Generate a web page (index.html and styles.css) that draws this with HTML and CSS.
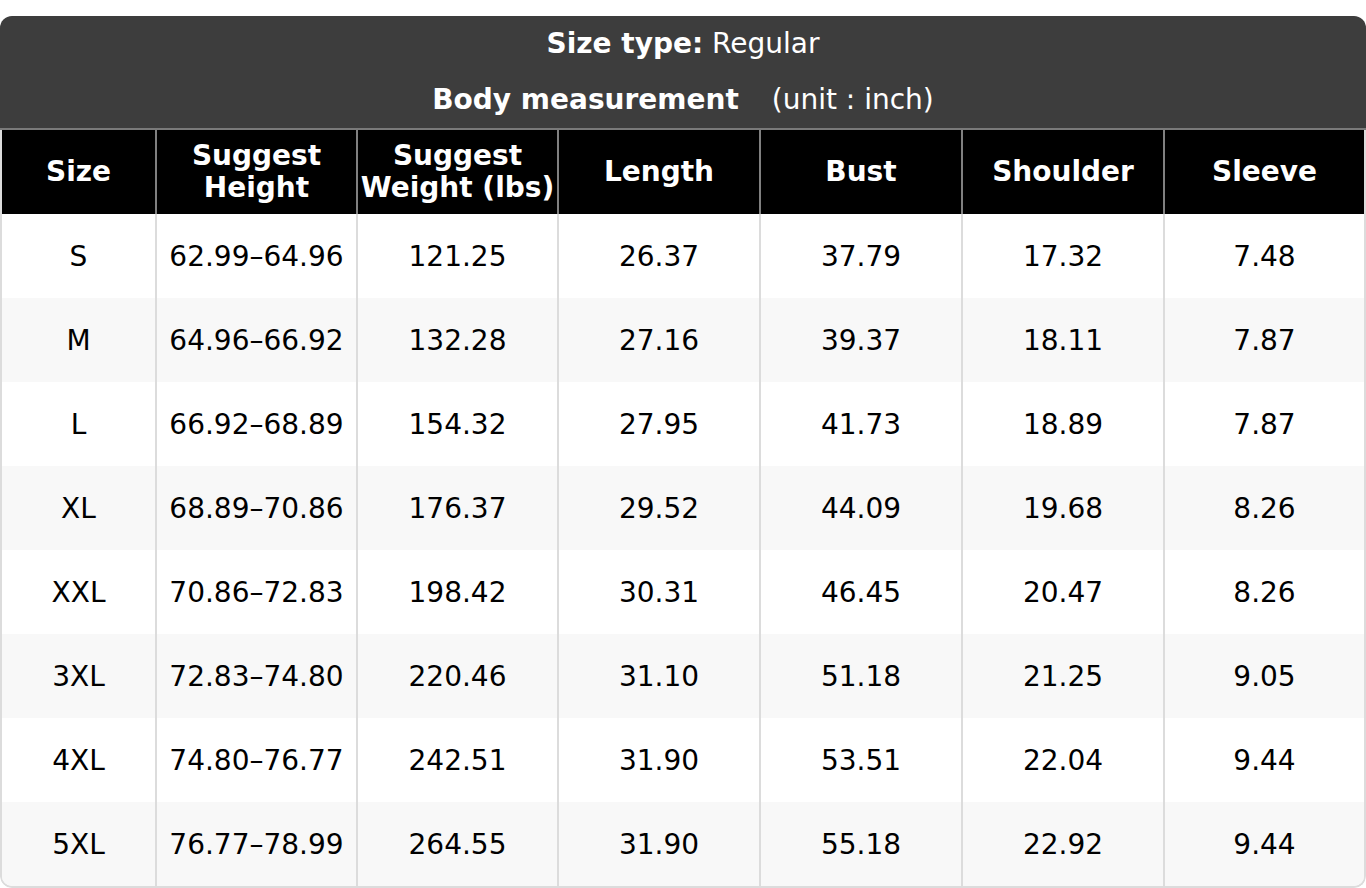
FILE: index.html
```html
<!DOCTYPE html>
<html>
<head>
<meta charset="utf-8">
<link rel="stylesheet" href="styles.css">
</head>
<body>
<div class="chart">
  <div class="title">
    <div class="line"><b>Size type:</b> Regular</div>
    <div class="line"><b>Body measurement</b><span class="unit">(unit : inch)</span></div>
  </div>
  <div class="wrap">
    <table>
      <colgroup><col class="c1"><col class="c2"><col class="c2"><col class="c3"><col class="c3"><col class="c3"><col></colgroup>
      <thead>
        <tr><th>Size</th><th>Suggest<br>Height</th><th>Suggest<br>Weight (lbs)</th><th>Length</th><th>Bust</th><th>Shoulder</th><th>Sleeve</th></tr>
      </thead>
      <tbody>
        <tr><td>S</td><td>62.99–64.96</td><td>121.25</td><td>26.37</td><td>37.79</td><td>17.32</td><td>7.48</td></tr>
        <tr><td>M</td><td>64.96–66.92</td><td>132.28</td><td>27.16</td><td>39.37</td><td>18.11</td><td>7.87</td></tr>
        <tr><td>L</td><td>66.92–68.89</td><td>154.32</td><td>27.95</td><td>41.73</td><td>18.89</td><td>7.87</td></tr>
        <tr><td>XL</td><td>68.89–70.86</td><td>176.37</td><td>29.52</td><td>44.09</td><td>19.68</td><td>8.26</td></tr>
        <tr><td>XXL</td><td>70.86–72.83</td><td>198.42</td><td>30.31</td><td>46.45</td><td>20.47</td><td>8.26</td></tr>
        <tr><td>3XL</td><td>72.83–74.80</td><td>220.46</td><td>31.10</td><td>51.18</td><td>21.25</td><td>9.05</td></tr>
        <tr><td>4XL</td><td>74.80–76.77</td><td>242.51</td><td>31.90</td><td>53.51</td><td>22.04</td><td>9.44</td></tr>
        <tr><td>5XL</td><td>76.77–78.99</td><td>264.55</td><td>31.90</td><td>55.18</td><td>22.92</td><td>9.44</td></tr>
      </tbody>
    </table>
  </div>
</div>
</body>
</html>
```
FILE: styles.css
```css
html, body {
  margin: 0;
  padding: 0;
  background: #ffffff;
}
body {
  padding-top: 16px;
  font-family: "DejaVu Sans", sans-serif;
}
.chart {
  width: 1366px;
  border-radius: 12px;
  overflow: hidden;
}
.title {
  background: #3d3d3d;
  color: #ffffff;
  text-align: center;
  font-size: 28px;
  border-bottom: 2px solid #7a7a7a;
}
.title .line {
  height: 56px;
  line-height: 56px;
}
.title b {
  font-weight: bold;
}
.unit {
  margin-left: 33px;
}
.wrap {
  border: 2px solid #dcdcdc;
  border-top: 0;
  border-radius: 0 0 12px 12px;
  overflow: hidden;
}
table {
  width: 1362px;
  border-collapse: separate;
  border-spacing: 0;
  table-layout: fixed;
}
col.c1 {
  width: 153px;
}
col.c2 {
  width: 201px;
}
col.c3 {
  width: 202px;
}
th {
  background: #000000;
  color: #ffffff;
  font-weight: bold;
  font-size: 28px;
  line-height: 32px;
  height: 84px;
  padding: 0;
  text-align: center;
  vertical-align: middle;
  border-left: 2px solid #808080;
  box-sizing: border-box;
}
th:first-child {
  border-left: 0;
}
td {
  font-size: 28px;
  color: #000000;
  height: 84px;
  padding: 0;
  text-align: center;
  vertical-align: middle;
  border-left: 2px solid #dcdcdc;
  box-sizing: border-box;
}
td:first-child {
  border-left: 0;
}
tbody tr:nth-child(even) td {
  background: #f8f8f8;
}
```
